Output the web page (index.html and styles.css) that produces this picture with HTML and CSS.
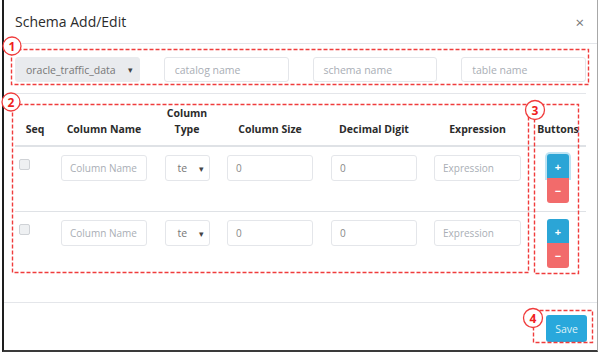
FILE: index.html
```html
<!DOCTYPE html>
<html>
<head>
	<meta charset="utf-8" />
	<title>Schema Add/Edit</title>
	<link rel="stylesheet" href="styles.css">
</head>
<body>
	<div class="modal">
		<div class="modal-header">
			<div class="modal-title">Schema Add/Edit</div>
			<div class="close">&times;</div>
		</div>
		<div class="modal-body">
			<div class="source-row">
				<div class="select grey">
					<span>oracle_traffic_data</span>
					<span class="caret">&#9662;</span>
				</div>
				<div class="input placeholder">catalog name</div>
				<div class="input placeholder">schema name</div>
				<div class="input placeholder">table name</div>
			</div>
			<div class="sep"></div>
			<div class="grid thead">
				<div class="cell">Seq</div>
				<div class="cell">Column Name</div>
				<div class="cell">Column<br />Type</div>
				<div class="cell">Column Size</div>
				<div class="cell">Decimal Digit</div>
				<div class="cell">Expression</div>
				<div class="cell">Buttons</div>
			</div>
			<div class="grid trow">
				<div class="cell seq"><span class="check"></span></div>
				<div class="cell"><div class="input placeholder name">Column Name</div></div>
				<div class="cell"><div class="select small"><span>te</span><span class="caret">&#9662;</span></div></div>
				<div class="cell"><div class="input num">0</div></div>
				<div class="cell"><div class="input num">0</div></div>
				<div class="cell"><div class="input placeholder expr">Expression</div></div>
				<div class="cell btns">
					<div class="btn plus focus">+</div>
					<div class="btn minus">&minus;</div>
				</div>
			</div>
			<div class="grid trow">
				<div class="cell seq"><span class="check"></span></div>
				<div class="cell"><div class="input placeholder name">Column Name</div></div>
				<div class="cell"><div class="select small"><span>te</span><span class="caret">&#9662;</span></div></div>
				<div class="cell"><div class="input num">0</div></div>
				<div class="cell"><div class="input num">0</div></div>
				<div class="cell"><div class="input placeholder expr">Expression</div></div>
				<div class="cell btns">
					<div class="btn plus">+</div>
					<div class="btn minus">&minus;</div>
				</div>
			</div>
		</div>
		<div class="modal-footer">
			<div class="btn-save">Save</div>
		</div>
	</div>

	<!-- annotation marks drawn over the dialog -->
	<svg class="marks" width="600" height="354" viewBox="0 0 600 354">
		<g fill="none" stroke="#f03c3c" stroke-width="1.4" stroke-dasharray="4 2">
			<rect x="11.5" y="49.5" width="577" height="35" />
			<rect x="12.5" y="104.5" width="516" height="168" />
			<rect x="534.5" y="104.5" width="44" height="169" />
			<rect x="533.5" y="310.5" width="59" height="32" />
		</g>
		<g fill="#fff" stroke="#f03c3c" stroke-width="1.3">
			<circle cx="12" cy="46" r="9" />
			<circle cx="11" cy="102" r="9" />
			<circle cx="535" cy="110" r="9.5" />
			<circle cx="533" cy="318" r="9.5" />
		</g>
		<g fill="#f01e1e" font-family="Open Sans, sans-serif" font-size="12" font-weight="700" text-anchor="middle">
			<text x="12" y="50.5">1</text>
			<text x="11" y="106.5">2</text>
			<text x="535" y="114.5">3</text>
			<text x="533" y="322.5">4</text>
		</g>
	</svg>
</body>
</html>
```

FILE: styles.css
```css
body {
	margin: 0;
	background: #fff;
	font-family: "Open Sans", "Liberation Sans", sans-serif;
	color: #333;
	position: relative;
	width: 600px;
	height: 354px;
	overflow: hidden;
}

.modal {
	margin-left: 2px;
	width: 593px;
	height: 350px;
	border-left: 2px solid #1e1e1e;
	border-right: 1px solid #a8a8a8;
	border-bottom: 2px solid #3a3a3a;
	display: flex;
	flex-direction: column;
}

.modal-header {
	height: 43px;
	border-bottom: 1px solid #e4e6ea;
	display: flex;
	align-items: center;
	justify-content: space-between;
	padding: 0 13px 0 11px;
}

.modal-title {
	font-size: 14px;
	color: #2b2b2b;
}

.close {
	font-size: 15px;
	color: #777;
}

.modal-body {
	flex: 1;
	padding: 13px 8px 0 11px;
}

.source-row {
	display: grid;
	grid-template-columns: repeat(4, 1fr);
	column-gap: 24px;
	width: 571px;
}

.input,
.select {
	height: 25px;
	box-sizing: border-box;
	border: 1px solid #e4e6ea;
	border-radius: 3px;
	background: #fff;
	font-size: 10.5px;
	display: flex;
	align-items: center;
	padding-left: 10px;
	white-space: nowrap;
	overflow: hidden;
}

.placeholder {
	color: #a9aeb5;
}

.select {
	justify-content: space-between;
	padding-right: 6px;
	color: #777;
}

.select.grey {
	background: #e9ebee;
	border-color: #e9ebee;
}

.caret {
	font-size: 9px;
	color: #444;
}

.sep {
	margin-top: 11px;
	width: 571px;
	border-top: 1px solid #e4e6ea;
}

.grid {
	display: grid;
	grid-template-columns: 40px 98px 68px 98px 110px 97px 60px;
	width: 571px;
}

.thead {
	padding: 11px 0 8px;
	border-bottom: 2px solid #dfe2e6;
	align-items: end;
	font-size: 10.5px;
	font-weight: 700;
	line-height: 16px;
	color: #2b2b2b;
	text-align: center;
}

.thead .cell:last-child {
	padding-left: 4px;
}

.trow {
	padding: 7px 0 8px;
}

.trow + .trow {
	border-top: 1px solid #dfe2e6;
}

.trow .cell {
	display: flex;
	justify-content: center;
	align-items: flex-start;
}

.trow .cell.seq {
	justify-content: flex-start;
	padding-left: 4px;
}

.check {
	margin-top: 5px;
	width: 9px;
	height: 9px;
	border: 1px solid #cfd2d6;
	border-radius: 2px;
	background: #eef0f2;
}

.input.name,
.input.num,
.input.expr {
	width: 86px;
	height: 26px;
	margin-top: 1px;
	padding-left: 8px;
	font-size: 10px;
}

.input.num {
	color: #888;
}

.input.expr {
	width: 87px;
}

.select.small {
	width: 45px;
	height: 26px;
	margin-top: 1px;
	padding-left: 12px;
	padding-right: 5px;
	color: #777;
}

.trow .cell.btns {
	flex-direction: column;
	align-items: center;
	padding-left: 4px;
}

.btn {
	width: 22px;
	height: 24px;
	border-radius: 3px;
	color: #fff;
	font-size: 11px;
	font-weight: 700;
	display: flex;
	align-items: center;
	justify-content: center;
}

.btn.plus {
	background: #2ba5d6;
	border-radius: 3px 3px 0 0;
}

.btn.plus.focus {
	box-shadow: 0 0 0 2px rgba(43, 165, 214, 0.3);
}

.btn.minus {
	background: #f26b6b;
	height: 25px;
	border-radius: 0 0 3px 3px;
}

.modal-footer {
	border-top: 1px solid #e4e6ea;
	padding: 12px 10px 8px;
	display: flex;
	justify-content: flex-end;
}

.btn-save {
	width: 41px;
	height: 27px;
	border-radius: 3px;
	background: #29a8dc;
	color: #dff1f8;
	font-size: 10.5px;
	display: flex;
	align-items: center;
	justify-content: center;
}

.marks {
	position: absolute;
	top: 0;
	left: 0;
	pointer-events: none;
}
```
